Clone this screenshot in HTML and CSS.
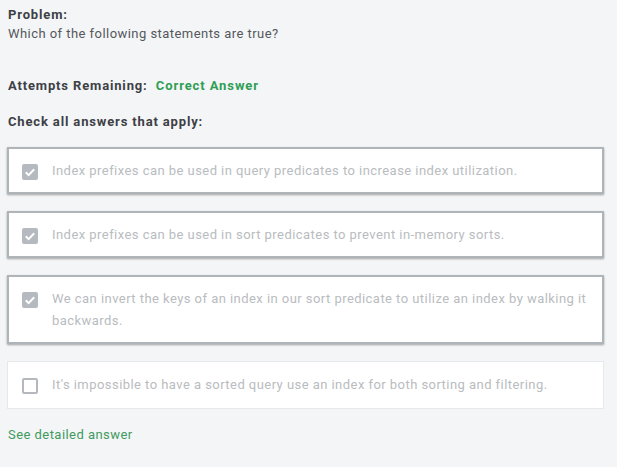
FILE: index.html
```html
<!DOCTYPE html>
<html>
<head>
<meta charset="utf-8">
<link rel="stylesheet" href="styles.css">
</head>
<body>
<div class="page">
  <div class="problem">
    <div class="label">Problem:</div>
    <div class="question">Which of the following statements are true?</div>
  </div>
  <div class="attempts"><span class="label">Attempts Remaining:</span> <span class="correct">Correct Answer</span></div>
  <div class="label instr">Check all answers that apply:</div>
  <div class="options">
    <div class="option selected">
      <span class="cb checked"><svg viewBox="0 0 16 16" width="16" height="16"><path d="M3.8 8.3l2.8 2.8 5.6-5.8" fill="none" stroke="#fff" stroke-width="2"/></svg></span>
      <span class="txt">Index prefixes can be used in query predicates to increase index utilization.</span>
    </div>
    <div class="option selected">
      <span class="cb checked"><svg viewBox="0 0 16 16" width="16" height="16"><path d="M3.8 8.3l2.8 2.8 5.6-5.8" fill="none" stroke="#fff" stroke-width="2"/></svg></span>
      <span class="txt">Index prefixes can be used in sort predicates to prevent in-memory sorts.</span>
    </div>
    <div class="option selected">
      <span class="cb checked"><svg viewBox="0 0 16 16" width="16" height="16"><path d="M3.8 8.3l2.8 2.8 5.6-5.8" fill="none" stroke="#fff" stroke-width="2"/></svg></span>
      <span class="txt">We can invert the keys of an index in our sort predicate to utilize an index by walking it backwards.</span>
    </div>
    <div class="option">
      <span class="cb"></span>
      <span class="txt">It's impossible to have a sorted query use an index for both sorting and filtering.</span>
    </div>
  </div>
  <div class="detail">See detailed answer</div>
</div>
</body>
</html>
```
FILE: styles.css
```css
html, body { margin: 0; padding: 0; }
body {
  background: #f4f5f7;
  font-family: Roboto, "Liberation Sans", sans-serif;
  font-size: 13px;
  color: #4a4d52;
}
.page { padding: 5px 13px 0 8px; }
.label { font-weight: 700; color: #3d4045; letter-spacing: 0.85px; }
.problem { line-height: 19px; }
.question { color: #55585c; letter-spacing: 0.45px; }
.attempts { margin-top: 33px; line-height: 19px; }
.correct { color: #2f9e55; font-weight: 700; letter-spacing: 0.9px; margin-left: 5px; }
.instr { margin-top: 17px; line-height: 19px; }
.options { margin-top: 16px; display: flex; flex-direction: column; gap: 17px; margin-left: -1px; }
.option {
  display: flex;
  align-items: flex-start;
  background: #fff;
  border: 1px solid #e6e8eb;
  padding: 12px 10px 12px 14px;
  line-height: 22px;
  color: #b9bcc0;
  letter-spacing: 0.45px;
}
.option.selected {
  border: 2px solid #afb4b9;
  padding: 11px 8px 10px 13px;
  box-shadow: 0 1px 2px rgba(0,0,0,0.35);
}
.cb {
  flex: none;
  width: 16px; height: 16px;
  margin-top: 4px;
  margin-right: 14px;
  box-sizing: border-box;
  border: 2px solid #b5b9be;
  border-radius: 2px;
  background: #fff;
  display: flex;
}
.cb.checked { border: none; background: #b5bac0; }
.cb svg { display: block; }
.txt { flex: 1; }
.detail { margin-top: 16px; color: #3f9a5e; letter-spacing: 0.45px; line-height: 19px; }
```
